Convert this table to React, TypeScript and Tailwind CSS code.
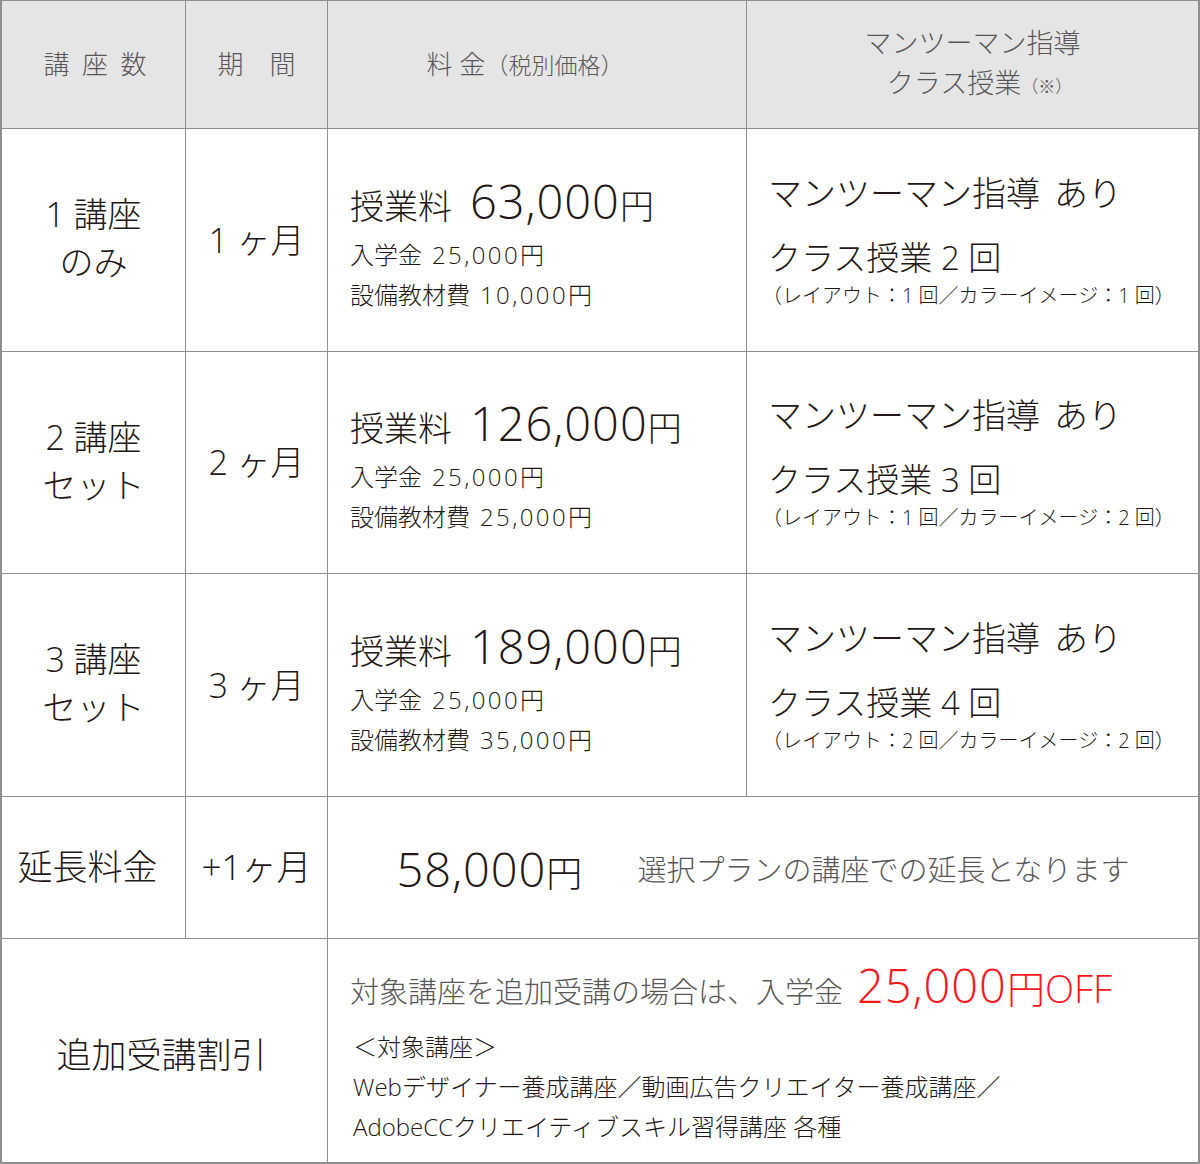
import React from 'react';

const plans = [
  {
    count: ['1 講座', 'のみ'],
    period: '1 ヶ月',
    fee: '63,000',
    material: '10,000',
    classes: '2',
    detail: '（レイアウト：1 回／カラーイメージ：1 回）',
  },
  {
    count: ['2 講座', 'セット'],
    period: '2 ヶ月',
    fee: '126,000',
    material: '25,000',
    classes: '3',
    detail: '（レイアウト：1 回／カラーイメージ：2 回）',
  },
  {
    count: ['3 講座', 'セット'],
    period: '3 ヶ月',
    fee: '189,000',
    material: '35,000',
    classes: '4',
    detail: '（レイアウト：2 回／カラーイメージ：2 回）',
  },
];

function Cell({ className = '', children }: { className?: string; children?: React.ReactNode }) {
  return <div className={`bg-white ${className}`}>{children}</div>;
}

export default function App() {
  return (
    <div className="w-[1200px] font-['Open_Sans','Noto_Sans_CJK_JP',sans-serif] font-light text-[#231815]">
      <div className="grid grid-cols-[183px_141px_418px_1fr] grid-rows-[127px_222px_221px_222px_141px_223px] gap-px bg-[#8e8e8e] border-t border-x-2 border-b-2 border-[#8e8e8e]">
        {/* header */}
        <Cell className="!bg-[#e5e5e6] flex items-center justify-center text-[26px] text-[#595757]">
          <span className="tracking-[0.48em] pl-[0.6em]">講座数</span>
        </Cell>
        <Cell className="!bg-[#e5e5e6] flex items-center justify-center text-[26px] text-[#595757]">
          期　間
        </Cell>
        <Cell className="!bg-[#e5e5e6] flex items-center justify-center text-[26px] text-[#595757] pr-[24px]">
          <span>
            料 金<span className="text-[23px]">（税別価格）</span>
          </span>
        </Cell>
        <Cell className="!bg-[#e5e5e6] flex flex-col items-center justify-center text-[27px] leading-[40px] text-[#595757]">
          <div>マンツーマン指導</div>
          <div className="pl-[14px]">
            クラス授業<span className="text-[17px]">（※）</span>
          </div>
        </Cell>

        {plans.map(p => (
          <React.Fragment key={p.fee}>
            <Cell className="flex flex-col items-center justify-center text-[34px] leading-[48px] pb-[4px]">
              <div>{p.count[0]}</div>
              <div>{p.count[1]}</div>
            </Cell>
            <Cell className="flex items-center justify-center text-[34px]">{p.period}</Cell>
            <Cell className="flex flex-col justify-center pl-[22px] pt-[6px]">
              <div className="text-[34px] leading-[58px] whitespace-nowrap">
                授業料<span className="ml-[18px] text-[47px] tracking-[0.02em]">{p.fee}</span>円
              </div>
              <div className="text-[24px] leading-[40px] whitespace-nowrap">
                入学金<span className="ml-[10px] tracking-[0.1em]">25,000</span>円
              </div>
              <div className="text-[24px] leading-[40px] whitespace-nowrap">
                設備教材費<span className="ml-[10px] tracking-[0.1em]">{p.material}</span>円
              </div>
            </Cell>
            <Cell className="flex flex-col justify-center pl-[21px] pb-[16px]">
              <div className="text-[34px] leading-[64px] whitespace-nowrap">
                マンツーマン指導<span className="ml-[14px]">あり</span>
              </div>
              <div className="text-[33px] leading-[60px] mt-[3px] whitespace-nowrap">
                クラス授業 {p.classes} 回
              </div>
              <div className="text-[20px] leading-[16px] -ml-[6px] whitespace-nowrap">{p.detail}</div>
            </Cell>
          </React.Fragment>
        ))}

        {/* extension */}
        <Cell className="flex items-center justify-center text-[35px] pr-[12px]">延長料金</Cell>
        <Cell className="flex items-center justify-center text-[35px]">+1ヶ月</Cell>
        <Cell className="col-span-2 flex items-center justify-center gap-[55px] pt-[4px]">
          <span className="text-[36px] whitespace-nowrap">
            <span className="text-[47px] tracking-[0.02em]">58,000</span>円
          </span>
          <span className="text-[29px] text-[#595757] whitespace-nowrap">選択プランの講座での延長となります</span>
        </Cell>

        {/* discount */}
        <Cell className="col-span-2 flex items-center justify-center text-[35px] pt-[10px] pr-[6px]">追加受講割引</Cell>
        <Cell className="col-span-2 flex flex-col justify-center pl-[22px]">
          <div className="text-[29px] leading-[60px] text-[#595757] whitespace-nowrap">
            対象講座を追加受講の場合は、入学金
            <span className="ml-[14px] text-[#f5191e]">
              <span className="text-[47px] tracking-[0.02em]">25,000</span>
              <span className="text-[38px]">円OFF</span>
            </span>
          </div>
          <div className="mt-[5px] text-[24px] leading-[40px] pl-[3px]">
            <div>＜対象講座＞</div>
            <div>Webデザイナー養成講座／動画広告クリエイター養成講座／</div>
            <div>AdobeCCクリエイティブスキル習得講座 各種</div>
          </div>
        </Cell>
      </div>
    </div>
  );
}
